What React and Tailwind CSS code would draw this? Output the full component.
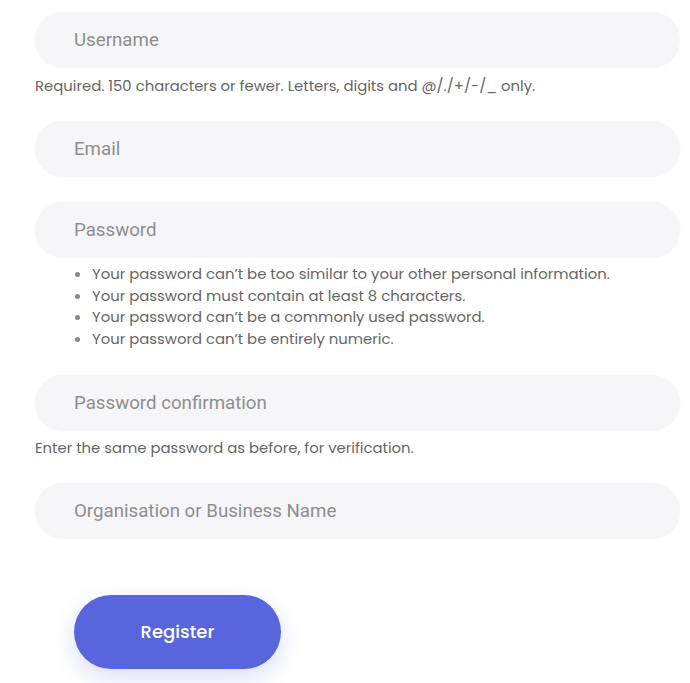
const fields = {
  inputFont: 'Roboto, "Liberation Sans", sans-serif',
};

function Field({ placeholder, type = 'text' }) {
  return (
    <input
      type={type}
      placeholder={placeholder}
      style={{ fontFamily: fields.inputFont }}
      className="block h-[56px] w-full rounded-full bg-[#f6f6f8] px-[39px] text-[18.7px] text-[#555] placeholder:text-[#8e8e8e] shadow-[0_0_3px_rgba(0,0,0,0.03)] outline-none"
    />
  );
}

export default function App() {
  return (
    <div className="min-h-[683px] bg-white pt-[12px] pl-[35px] pr-[10px] font-['Poppins','Lato',sans-serif] text-[14.85px] text-[#666]">
      <form onSubmit={(e) => e.preventDefault()}>
        <Field placeholder="Username" />
        <p className="mt-[7px] leading-[21px]">
          Required. 150 characters or fewer. Letters, digits and @/./+/-/_ only.
        </p>

        <div className="mt-[25px]">
          <Field placeholder="Email" type="email" />
        </div>

        <div className="mt-[25px]">
          <Field placeholder="Password" type="password" />
        </div>
        <ul className="mt-[5px] list-disc pl-[57px] leading-[21.7px] marker:text-[#888]">
          <li>Your password can’t be too similar to your other personal information.</li>
          <li>Your password must contain at least 8 characters.</li>
          <li>Your password can’t be a commonly used password.</li>
          <li>Your password can’t be entirely numeric.</li>
        </ul>

        <div className="mt-[25px]">
          <Field placeholder="Password confirmation" type="password" />
        </div>
        <p className="mt-[6px] leading-[21px]">Enter the same password as before, for verification.</p>

        <div className="mt-[25px]">
          <Field placeholder="Organisation or Business Name" />
        </div>

        <button
          type="submit"
          className="mt-[56px] ml-[39px] h-[74px] w-[207px] rounded-full bg-[#5865dc] text-[18px] font-medium text-white shadow-[0_8px_22px_rgba(88,101,220,0.22)]"
        >
          Register
        </button>
      </form>
    </div>
  );
}
